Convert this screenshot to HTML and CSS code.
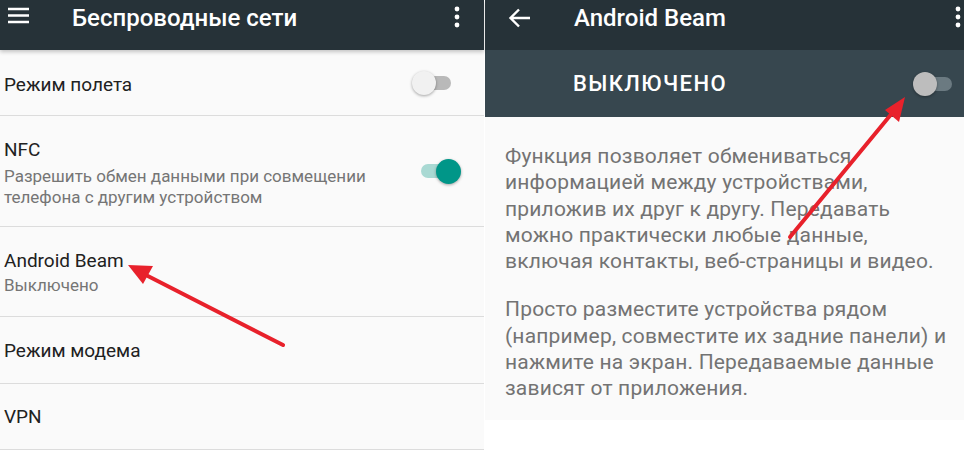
FILE: index.html
```html
<!DOCTYPE html>
<html lang="ru">
<head>
  <meta charset="UTF-8">
  <title>Беспроводные сети / Android Beam</title>
  <link rel="stylesheet" href="styles.css">
</head>
<body>
  <div class="screen settings">
    <div class="toolbar">
      <svg class="icon menu" width="24" height="24" viewBox="0 0 24 24">
        <path d="M1 4h21M1 10.5h21M1 17h21" stroke="#fff" stroke-width="2.6"/>
      </svg>
      <div class="toolbar-title">Беспроводные сети</div>
      <svg class="icon dots" width="8" height="24" viewBox="0 0 8 24">
        <circle cx="4" cy="4" r="2.4" fill="#fff"/>
        <circle cx="4" cy="12" r="2.4" fill="#fff"/>
        <circle cx="4" cy="20" r="2.4" fill="#fff"/>
      </svg>
    </div>

    <div class="row row-plane">
      <div class="row-text">
        <div class="row-title">Режим полета</div>
      </div>
      <div class="switch off"><span class="track"></span><span class="thumb"></span></div>
    </div>

    <div class="row row-nfc">
      <div class="row-text">
        <div class="row-title">NFC</div>
        <div class="row-sub">Разрешить обмен данными при совмещении<br>телефона с другим устройством</div>
      </div>
      <div class="switch on"><span class="track"></span><span class="thumb"></span></div>
    </div>

    <div class="row row-beam">
      <div class="row-text">
        <div class="row-title">Android Beam</div>
        <div class="row-sub">Выключено</div>
      </div>
    </div>

    <div class="row row-modem">
      <div class="row-text">
        <div class="row-title">Режим модема</div>
      </div>
    </div>

    <div class="row row-vpn">
      <div class="row-text">
        <div class="row-title">VPN</div>
      </div>
    </div>
  </div>

  <div class="screen beam">
    <div class="toolbar">
      <svg class="icon back" width="24" height="24" viewBox="0 0 24 24">
        <path d="M22 12H3.5M11 3.5L2.5 12l8.5 8.5" stroke="#fff" stroke-width="2.4" fill="none"/>
      </svg>
      <div class="toolbar-title">Android Beam</div>
      <svg class="icon dots" width="8" height="24" viewBox="0 0 8 24">
        <circle cx="4" cy="4" r="2.4" fill="#fff"/>
        <circle cx="4" cy="12" r="2.4" fill="#fff"/>
        <circle cx="4" cy="20" r="2.4" fill="#fff"/>
      </svg>
    </div>

    <div class="master">
      <div class="master-label">ВЫКЛЮЧЕНО</div>
      <div class="switch dark"><span class="track"></span><span class="thumb"></span></div>
    </div>

    <div class="about">
      <p>Функция позволяет обмениваться<br>информацией между устройствами,<br>приложив их друг к другу. Передавать<br>можно практически любые данные,<br>включая контакты, веб-страницы и видео.</p>
      <p>Просто разместите устройства рядом<br>(например, совместите их задние панели) и<br>нажмите на экран. Передаваемые данные<br>зависят от приложения.</p>
    </div>
  </div>

  <!-- red annotation arrows drawn over both screenshots -->
  <svg class="arrows" width="964" height="450" viewBox="0 0 964 450">
    <path d="M283 345L140 272" stroke="#e8212b" stroke-width="4" stroke-linecap="round"/>
    <path d="M128 265L153 266L143 284Z" fill="#e8212b"/>
    <path d="M790 237L893 112" stroke="#e8212b" stroke-width="4" stroke-linecap="round"/>
    <path d="M905 97L885 110L899 122Z" fill="#e8212b"/>
  </svg>
</body>
</html>
```

FILE: styles.css
```css
body {
  margin: 0;
  width: 964px;
  height: 450px;
  display: flex;
  gap: 1px;
  background: #fff;
  font-family: Roboto, "Noto Sans", sans-serif;
  position: relative;
  overflow: hidden;
}

.screen {
  display: flex;
  flex-direction: column;
}

.settings {
  width: 484px;
  background: #fafafa;
}

.beam {
  flex: 1;
}

.toolbar {
  height: 50px;
  padding-bottom: 16px;
  box-sizing: border-box;
  display: flex;
  align-items: center;
  background: #263238;
  color: #fff;
  position: relative;
  z-index: 1;
}

.settings .toolbar {
  box-shadow: 0 2px 4px rgba(0, 0, 0, 0.22);
}

.icon {
  display: block;
  flex: none;
}

.menu {
  margin-left: 7px;
}

.back {
  margin-left: 23px;
  margin-top: 2px;
}

.toolbar-title {
  flex: 1;
  font-size: 24px;
  font-weight: 500;
  margin-left: 41px;
  margin-top: 2px;
}

.beam .toolbar-title {
  margin-left: 42px;
}

.settings .dots {
  margin-right: 23px;
}

.beam .dots {
  margin-right: 2px;
}

.row {
  display: flex;
  align-items: center;
  padding-left: 4px;
  border-bottom: 1px solid #dcdcdc;
  box-sizing: border-box;
}

.row-text {
  flex: 1;
}

.row-title {
  font-size: 19px;
  color: #212121;
}

.row-sub {
  font-size: 17px;
  line-height: 21px;
  color: #757575;
}

.row-plane {
  height: 66px;
  padding-top: 3px;
}

.row-nfc {
  height: 111px;
  padding-top: 4px;
}

.row-nfc .row-title {
  margin-bottom: 5px;
}

.row-beam {
  height: 90px;
  padding-top: 2px;
}

.row-beam .row-title {
  margin-bottom: 3px;
}

.row-modem {
  height: 67px;
}

.row-vpn {
  height: 66px;
}

/* switches */
.switch {
  position: relative;
  width: 39px;
  height: 24px;
  flex: none;
}

.switch .track {
  position: absolute;
  top: 5px;
  height: 14px;
  border-radius: 7px;
}

.switch .thumb {
  position: absolute;
  top: 0;
  width: 24px;
  height: 24px;
  border-radius: 50%;
  box-shadow: 0 1px 3px rgba(0, 0, 0, 0.35);
}

.switch.off {
  margin-right: 33px;
  margin-top: -3px;
}

.switch.off .track {
  left: 6px;
  right: 0;
  background: #b9b9b9;
}

.switch.off .thumb {
  left: 0;
  background: #f1f1f1;
}

.switch.on {
  width: 40px;
  margin-right: 23px;
  margin-top: -4px;
}

.switch.on .track {
  left: 0;
  right: 6px;
  background: #a9d9d3;
}

.switch.on .thumb {
  right: 0;
  width: 25px;
  height: 25px;
  background: #009688;
}

.master {
  height: 67px;
  padding-left: 88px;
  display: flex;
  align-items: center;
  background: #37474f;
  color: #fff;
}

.master-label {
  flex: 1;
  font-size: 22px;
  font-weight: 500;
  letter-spacing: 1.4px;
}

.switch.dark {
  margin-right: 12px;
}

.switch.dark .track {
  left: 6px;
  right: 0;
  background: #6b7a81;
}

.switch.dark .thumb {
  left: 0;
  background: #bdbdbd;
}

.about {
  height: 303px;
  padding: 26px 0 0 20px;
  box-sizing: border-box;
  background: #fafafa;
}

.about p {
  margin: 0 0 22px;
  font-size: 21px;
  line-height: 26.3px;
  letter-spacing: 0.18px;
  color: #737373;
}

.arrows {
  position: absolute;
  left: 0;
  top: 0;
  pointer-events: none;
}
```
